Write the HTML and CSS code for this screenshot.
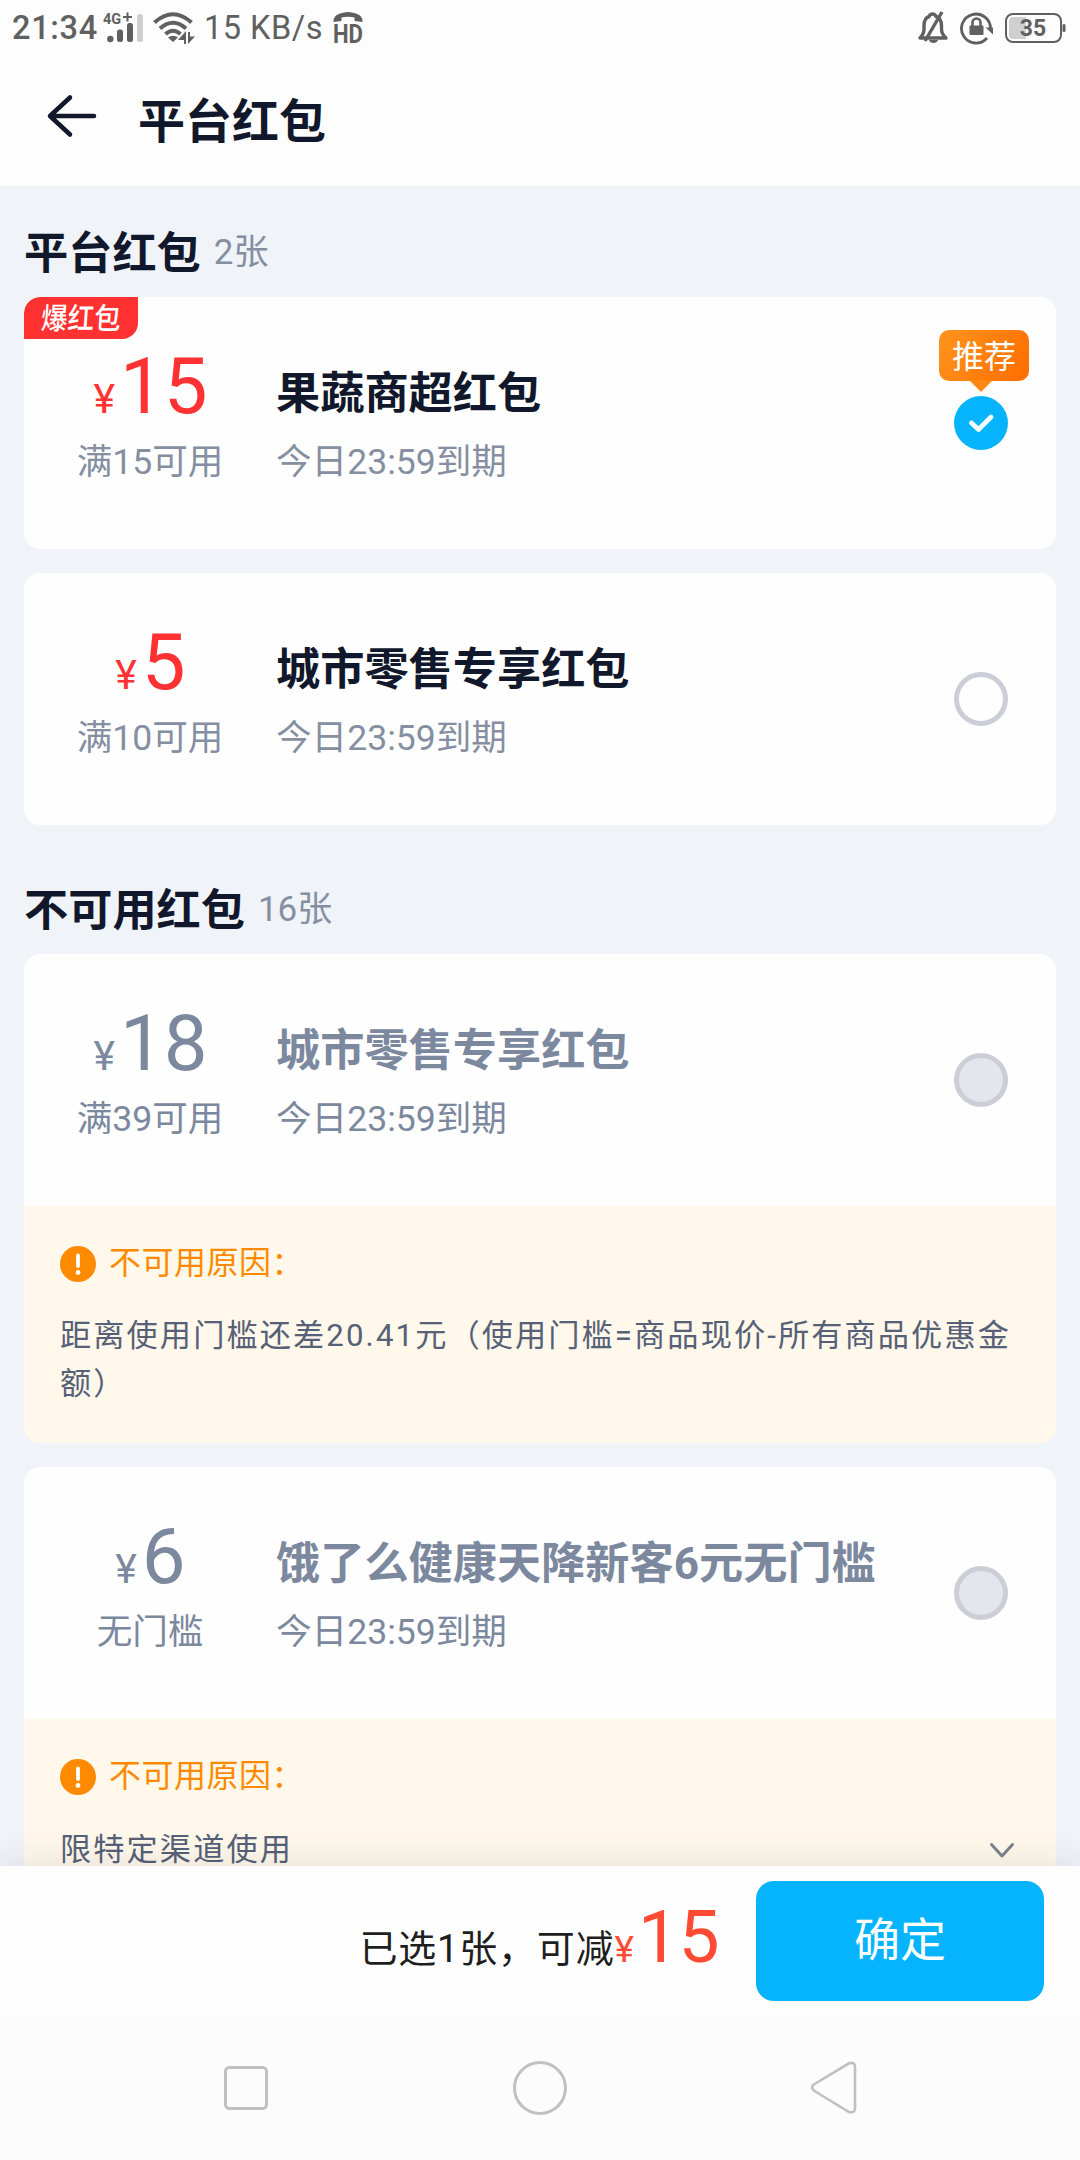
FILE: index.html
```html
<!DOCTYPE html>
<html lang="zh-CN">
<head>
<meta charset="utf-8">
<title>平台红包</title>
<link rel="stylesheet" href="styles.css">
</head>
<body>
<div class="screen">
  <div class="status">
    <span class="clock">21:34</span>
    <svg class="i-signal" width="42" height="34" viewBox="0 0 42 34">
      <text x="0" y="12.500" class="net">4G</text>
      <path d="M20 6h9M24.500 1.500v9" stroke="#606060" stroke-width="2"/>
      <g fill="#606060"><circle cx="7.300" cy="28" r="3.200"/><rect x="14" y="18.500" width="6" height="12.500" rx="2.500"/><rect x="24" y="12" width="6" height="19" rx="2.500"/></g>
      <rect x="34" y="3" width="6" height="28" rx="2.500" fill="#cfcfcf"/>
    </svg>
    <svg class="i-wifi" width="42" height="34" viewBox="0 0 42 34">
      <g fill="none" stroke="#606060" stroke-width="4">
        <path d="M1.500 11.500Q20 -5 38.500 11.500"/><path d="M7 17.500Q20 6 33 17.500"/><path d="M12.500 23Q20 16.500 27.500 23"/>
      </g>
      <path d="M15 26.500Q20 23 25 26.500L20 31Z" fill="#606060"/>
      <path d="M25 29l8-9v13h-2v-4zM35 33V21h2v4.500h5z" fill="#606060"/>
    </svg>
    <span class="speed">15 KB/s</span>
    <svg class="i-hd" width="32" height="34" viewBox="0 0 32 34">
      <path d="M.5 11Q0 5 7 2.500Q15 -.5 23 2.500Q30 5 29.500 11L21.500 10V6.500Q15 5 8.500 6.500V10Z" fill="#606060"/>
      <text x="0" y="31.500" class="hd" textLength="30" lengthAdjust="spacingAndGlyphs">HD</text>
    </svg>
    <span class="grow"></span>
    <svg class="i-bell" width="32" height="34" viewBox="0 0 32 34">
      <path d="M3 27q4-4 4-9v-3q0-8 5-9.500Q13 3 15.500 3T19 5.500Q24.500 7 24.500 15v3q0 5 4.500 9Z" fill="none" stroke="#606060" stroke-width="3.400" stroke-linejoin="round"/>
      <path d="M25 1L8 30" stroke="#606060" stroke-width="3.400"/><path d="M12 29h9q-1 3-4.500 3T12 29" fill="#606060"/>
    </svg>
    <svg class="i-lock" width="34" height="34" viewBox="0 0 34 34">
      <path d="M30.500 18A14.500 14.500 0 1 0 27 27" fill="none" stroke="#606060" stroke-width="2.800"/>
      <path d="M25.500 16.500h7.500v7z" fill="#606060"/>
      <rect x="9.500" y="14.500" width="14" height="9.500" rx="1" fill="#606060"/>
      <path d="M12.500 15v-3.500a4 4 0 0 1 8 0V15" fill="none" stroke="#606060" stroke-width="2.600"/>
    </svg>
    <svg class="i-battery" width="61" height="32" viewBox="0 0 61 32">
      <rect x="1" y="2" width="55" height="28" rx="7" fill="none" stroke="#606060" stroke-width="2"/>
      <path d="M8 5h13v22H8a4 4 0 0 1-4-4V9a4 4 0 0 1 4-4" fill="#cfcfcf"/>
      <rect x="57.500" y="12" width="3" height="8" rx="1.500" fill="#606060"/>
      <text x="28" y="24" class="batt">35</text>
    </svg>
  </div>
  <div class="titlebar">
    <svg width="52" height="46" viewBox="0 0 52 46"><path d="M24 4.500L4 23L24 41.500M4 23H48" fill="none" stroke="#12182b" stroke-width="4.500" stroke-linecap="round" stroke-linejoin="round"/></svg>
    <h1>平台红包</h1>
  </div>

  <div class="list">
    <div class="section"><h2>平台红包</h2><span>2张</span></div>
    <div class="card">
      <div class="coupon">
        <i class="hot"><b>爆红包</b></i>
        <div class="value red"><p class="price"><small>¥</small>15</p><p class="sub">满15可用</p></div>
        <div class="info"><h3>果蔬商超红包</h3><p class="sub">今日23:59到期</p></div>
        <div class="pick">
          <span class="tip">推荐</span>
          <svg width="54" height="54" viewBox="0 0 54 54"><circle cx="27" cy="27" r="27" fill="#06b4fd"/><path d="M17.500 27L24.500 33.500L37 21" fill="none" stroke="#f2fbff" stroke-width="4.800" stroke-linecap="round" stroke-linejoin="round"/></svg>
        </div>
      </div>
    </div>
    <div class="card">
      <div class="coupon">
        <div class="value red"><p class="price"><small>¥</small>5</p><p class="sub">满10可用</p></div>
        <div class="info"><h3>城市零售专享红包</h3><p class="sub">今日23:59到期</p></div>
        <div class="pick radio"></div>
      </div>
    </div>

    <div class="section second"><h2>不可用红包</h2><span>16张</span></div>
    <div class="card off">
      <div class="coupon">
        <div class="value"><p class="price"><small>¥</small>18</p><p class="sub">满39可用</p></div>
        <div class="info"><h3>城市零售专享红包</h3><p class="sub">今日23:59到期</p></div>
        <div class="pick radio"></div>
      </div>
      <div class="notice">
        <div class="why"><svg width="36" height="36" viewBox="0 0 36 36"><circle cx="18" cy="18" r="18" fill="#ff8a00"/><path d="M18 9.500V20" stroke="#fff" stroke-width="3.800" stroke-linecap="round"/><circle cx="18" cy="26.500" r="2.400" fill="#fff"/></svg><span>不可用原因：</span></div>
        <p class="reason">距离使用门槛还差20.41元（使用门槛=商品现价-所有商品优惠金额）</p>
      </div>
    </div>
    <div class="card off">
      <div class="coupon">
        <div class="value"><p class="price"><small>¥</small>6</p><p class="sub">无门槛</p></div>
        <div class="info"><h3>饿了么健康天降新客6元无门槛</h3><p class="sub">今日23:59到期</p></div>
        <div class="pick radio"></div>
      </div>
      <div class="notice">
        <div class="why"><svg width="36" height="36" viewBox="0 0 36 36"><circle cx="18" cy="18" r="18" fill="#ff8a00"/><path d="M18 9.500V20" stroke="#fff" stroke-width="3.800" stroke-linecap="round"/><circle cx="18" cy="26.500" r="2.400" fill="#fff"/></svg><span>不可用原因：</span></div>
        <div class="more"><p class="reason">限特定渠道使用</p><svg width="26" height="18" viewBox="0 0 26 18"><path d="M2.500 3.500L13 15L23.500 3.500" fill="none" stroke="#7b828c" stroke-width="3" stroke-linecap="round" stroke-linejoin="round"/></svg></div>
      </div>
    </div>
  </div>

  <div class="footer">
    <p class="total">已选1张，可减<em>¥</em><strong>15</strong></p>
    <button class="ok">确定</button>
  </div>
  <div class="nav">
    <svg width="46" height="58" viewBox="0 0 46 58"><rect x="2.500" y="8.500" width="41" height="41" rx="4" fill="none" stroke="#c0c0c0" stroke-width="3"/></svg>
    <svg width="58" height="58" viewBox="0 0 58 58"><circle cx="29" cy="29" r="25.500" fill="none" stroke="#c0c0c0" stroke-width="3"/></svg>
    <svg width="46" height="58" viewBox="0 0 46 58"><path d="M2.800 25.500L38 4.300Q44 2.500 44 8V49Q44 54.500 38 53L2.800 31.500Q-.5 28.500 2.800 25.500Z" fill="none" stroke="#c0c0c0" stroke-width="2.600"/></svg>
  </div>
</div>
</body>
</html>
```
FILE: styles.css
```css
* { box-sizing: border-box; margin: 0; padding: 0; }
body { font-family: Roboto, "Noto Sans CJK SC", sans-serif; background: #fdfdfd; }
h1, h2, h3, small, em, i, strong { font-weight: inherit; font-style: normal; }
svg { display: block; flex: none; }
.grow { flex: 1; }

.screen { width: 1080px; height: 2160px; display: flex; flex-direction: column; overflow: hidden; }

.status { height: 54px; display: flex; align-items: center; padding: 1px 14px 0 12px; color: #606060; font-size: 32.5px; line-height: 54px; white-space: nowrap; }
.clock { font-weight: 500; letter-spacing: .7px; width: 91px; }
.i-wifi { margin-left: 8px; }
.speed { margin: 0 10px 0 9px; letter-spacing: .5px; }
.i-bell { margin-right: 11px; }
.i-lock { margin-right: 11px; }
.net { font: 700 14.5px Roboto, sans-serif; fill: #606060; }
.hd { font: 700 26px Roboto, sans-serif; fill: #606060; }
.batt { font: 700 23px Roboto, sans-serif; fill: #606060; text-anchor: middle; }

.titlebar { height: 132px; display: flex; align-items: center; padding: 0 0 8px 46px; gap: 40px; color: #12182b; }
.titlebar h1 { font-size: 47px; line-height: 64px; font-weight: 700; padding-top: 11px; }

.list { flex: 1; min-height: 0; overflow: hidden; background: #f0f3f8; padding: 0 24px; }
.section { display: flex; align-items: center; height: 111px; padding: 38px 0 13px; line-height: 60px; color: #12182b; }
.section.second { height: 129px; padding-top: 56px; }
.section h2 { font-size: 44.2px; font-weight: 700; }
.section span { font-size: 35px; color: #858fa1; margin-left: 13px; position: relative; top: -1px; }

.card { background: #fefefe; border-radius: 16px; overflow: hidden; }
.card + .card { margin-top: 24px; }
.coupon { position: relative; height: 252px; display: flex; padding-right: 48px; }
.value { width: 252px; padding-top: 50px; text-align: center; }
.price { font-size: 78px; line-height: 80px; height: 91px; padding-left: 1px; white-space: nowrap; }
.price small { font-size: 41px; margin-right: 5px; }
.sub { font-size: 35.6px; line-height: 48px; color: #858fa1; }
.info { flex: 1; padding-top: 67px; }
.info h3 { font-size: 44.2px; font-weight: 700; line-height: 60px; margin-bottom: 14px; color: #12182b; white-space: nowrap; }
.red .price { color: #ff3233; }
.off .price, .off h3, .off .sub { color: #7c889e; }
.pick { position: relative; align-self: center; width: 54px; height: 54px; flex: none; }
.radio { border: 5px solid #cbced6; border-radius: 50%; }
.off .radio { background: #e3e6ec; }
.tip { position: absolute; left: -15px; top: -66px; width: 90px; height: 51px; border-radius: 10px; background: linear-gradient(120deg, #ff951c, #ff6c00); color: #fff; font-size: 32px; line-height: 54px; text-align: center; }
.tip::after { content: ""; position: absolute; left: 30px; top: 50px; border: 12px solid transparent; border-top-color: #ff8611; border-bottom: 0; }
.hot { position: absolute; left: 0; top: 0; width: 114px; height: 42px; background: #ff3231; border-radius: 16px 0 16px 0; color: #fff; font-size: 26.5px; line-height: 43px; text-align: center; }
.hot b { display: block; font-weight: 500; transform: skewX(-4deg) scaleY(1.12); }

.notice { background: #fff8eb; padding: 36px 36px 35px; }
.why { display: flex; align-items: center; height: 44px; gap: 13px; margin-bottom: 26px; color: #ff8a00; font-size: 32px; line-height: 40px; letter-spacing: .5px; }
.why span { padding-bottom: 2px; }
.reason { font-size: 31.2px; line-height: 48px; letter-spacing: 2.1px; color: #566076; margin-right: -6px; }
.more { display: flex; justify-content: space-between; align-items: center; padding: 1px 5px 0 0; }

.footer { position: relative; height: 150px; background: #fefefe; box-shadow: 0 0 36px rgba(40, 50, 60, .13); display: flex; justify-content: flex-end; padding: 15px 36px 0 0; }
.total { font-size: 38px; line-height: 90px; padding-top: 16px; letter-spacing: .8px; color: #1f1f1f; margin-right: 37px; white-space: nowrap; }
.total em, .total strong { color: #ff4b33; letter-spacing: 0; }
.total em { font-size: 37px; }
.total strong { font-size: 73px; line-height: 80px; margin-left: 4px; letter-spacing: -.5px; }
.ok { width: 288px; height: 120px; border: 0; border-radius: 18px; background: #06b4fd; color: #fff; font: 400 46px/117px Roboto, "Noto Sans CJK SC", sans-serif; padding-bottom: 2px; }
.nav { position: relative; height: 144px; background: #fcfcfc; display: flex; justify-content: space-between; align-items: center; padding: 0 223px 0 223px; }
```
